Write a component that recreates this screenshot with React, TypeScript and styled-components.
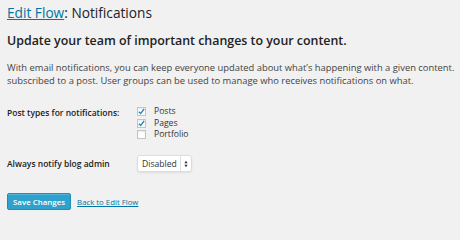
import React from "react"
import styled, { createGlobalStyle } from "styled-components"

const GlobalStyle = createGlobalStyle`
  html, body {
    margin: 0;
    background: #f1f1f1;
  }
  body {
    font-family: "Open Sans", "Liberation Sans", sans-serif;
    color: #444;
  }
`

const Wrap = styled.div`
  padding: 3px 7px 0;
  width: 460px;
  height: 215px;
  box-sizing: border-box;
  overflow: hidden;
`

const Title = styled.h1`
  margin: 0;
  font-size: 13.7px;
  font-weight: 400;
  line-height: 20px;
  color: #222;
  a {
    color: #0074a2;
    text-decoration: underline;
  }
`

const Heading = styled.h2`
  margin: 9px 0 0;
  font-size: 12.4px;
  font-weight: 600;
  line-height: 17px;
  color: #222;
`

const Intro = styled.p`
  margin: 12px 0 0;
  font-size: 9.4px;
  line-height: 13px;
  color: #444;
  white-space: nowrap;
`

const FormTable = styled.div`
  margin-top: 20px;
  display: grid;
  grid-template-columns: 130px 1fr;
  row-gap: 16px;
`

const Label = styled.div<{ $top?: number }>`
  font-size: 8.5px;
  font-weight: 600;
  line-height: 12px;
  color: #222;
  padding-top: ${p => p.$top ?? 0}px;
`

const Choices = styled.div`
  display: flex;
  flex-direction: column;
  gap: 2.7px;
`

const Choice = styled.label`
  display: flex;
  align-items: center;
  gap: 8px;
  font-size: 8.6px;
  line-height: 9px;
  color: #333;
`

const Box = styled.span`
  width: 7px;
  height: 7px;
  border: 1px solid #c4c4c4;
  background: #fff;
  box-shadow: inset 0 1px 2px rgba(0, 0, 0, 0.08);
  display: flex;
  align-items: center;
  justify-content: center;
`

const Select = styled.div`
  display: inline-flex;
  align-items: stretch;
  height: 15px;
  border: 1px solid #ddd;
  border-radius: 3px;
  background: #fff;
  box-shadow: 0 1px 2px rgba(0, 0, 0, 0.08);
  font-size: 8.6px;
  color: #333;
  width: fit-content;
`

const SelectText = styled.span`
  display: flex;
  align-items: center;
  padding: 0 3px 0 4px;
`

const Arrows = styled.span`
  display: flex;
  align-items: center;
  padding: 0 3px;
  border-left: 1px solid #e2e2e2;
`

const Actions = styled.div`
  margin-top: 21px;
  display: flex;
  align-items: center;
  gap: 6px;
`

const Button = styled.button`
  font-family: inherit;
  font-size: 7.9px;
  font-weight: 600;
  color: #fff;
  background: #2ea2cc;
  border: 1px solid #1b8fbb;
  border-radius: 2px;
  height: 17px;
  padding: 0 5px;
  box-shadow: inset 0 1px 0 rgba(120, 200, 230, 0.5);
`

const Link = styled.a`
  font-size: 7.8px;
  color: #0074a2;
  text-decoration: underline;
`

const Check = () => (
  <svg width="7" height="7" viewBox="0 0 8 8">
    <path d="M1 4.2 L3 6.2 L7 1.2" fill="none" stroke="#1e8cbe" strokeWidth="1.6" />
  </svg>
)

export default function App() {
  const types = [
    { name: "Posts", on: true },
    { name: "Pages", on: true },
    { name: "Portfolio", on: false },
  ]
  return (
    <Wrap>
      <GlobalStyle />
      <Title>
        <a href="#">Edit Flow</a>: Notifications
      </Title>
      <Heading>Update your team of important changes to your content.</Heading>
      <Intro>
        With email notifications, you can keep everyone updated about what’s happening with a given content.
        <br />
        subscribed to a post. User groups can be used to manage who receives notifications on what.
      </Intro>
      <FormTable>
        <Label $top={0}>Post types for notifications:</Label>
        <Choices>
          {types.map(t => (
            <Choice key={t.name}>
              <Box>{t.on && <Check />}</Box>
              {t.name}
            </Choice>
          ))}
        </Choices>
        <Label $top={3}>Always notify blog admin</Label>
        <Select>
          <SelectText>Disabled</SelectText>
          <Arrows>
            <svg width="4" height="8" viewBox="0 0 5 9">
              <path d="M2.5 0.5 L4.5 3.5 H0.5 Z M2.5 8.5 L4.5 5.5 H0.5 Z" fill="#333" />
            </svg>
          </Arrows>
        </Select>
      </FormTable>
      <Actions>
        <Button>Save Changes</Button>
        <Link href="#">Back to Edit Flow</Link>
      </Actions>
    </Wrap>
  )
}
